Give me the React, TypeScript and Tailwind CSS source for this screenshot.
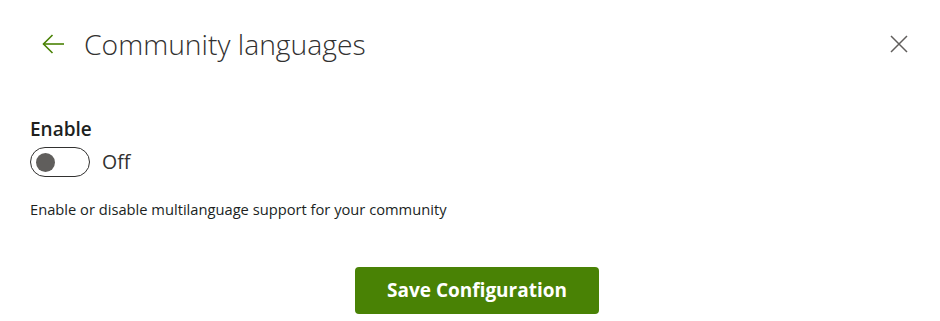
import React, { useState } from 'react';

export default function App() {
  const [enabled, setEnabled] = useState(false);

  return (
    <div className="w-[940px] h-[321px] bg-white font-['Open_Sans','Noto_Sans',sans-serif] text-[#323130]">
      {/* Header */}
      <div className="flex items-center justify-between pl-[42px] pr-[32px] pt-[26px]">
        <div className="flex items-center gap-[20px]">
          <button className="text-[#498205]" aria-label="Back">
            <svg width="22" height="20" viewBox="0 0 22 20" fill="none" stroke="currentColor" strokeWidth="1.6">
              <path d="M22 10H1.5" />
              <path d="M10.5 1L1.5 10l9 9" />
            </svg>
          </button>
          <h1 className="text-[28.3px] font-light leading-[36px] text-[#323130]">Community languages</h1>
        </div>
        <button className="text-[#605e5c]" aria-label="Close">
          <svg width="18" height="18" viewBox="0 0 18 18" fill="none" stroke="currentColor" strokeWidth="1.5">
            <path d="M1 1l16 16M17 1L1 17" />
          </svg>
        </button>
      </div>

      {/* Body */}
      <div className="pl-[30px] pt-[55px]">
        <div className="text-[19px] font-semibold leading-[24px] text-[#201f1e]">Enable</div>
        <div className="flex items-center gap-[12px] mt-[6px]">
          <button
            onClick={() => setEnabled(!enabled)}
            className={`w-[60px] h-[30px] rounded-full border border-[#323130] flex items-center px-[5px] ${enabled ? 'justify-end bg-[#498205]' : 'justify-start bg-white'}`}
          >
            <span className={`w-[19px] h-[19px] rounded-full ${enabled ? 'bg-white' : 'bg-[#605e5c]'}`} />
          </button>
          <span className="text-[19.5px] leading-[24px]">{enabled ? 'On' : 'Off'}</span>
        </div>
        <p className="mt-[22px] text-[14.7px] leading-[20px] text-[#201f1e]">
          Enable or disable multilanguage support for your community
        </p>
      </div>

      {/* Footer */}
      <div className="flex justify-center pl-[14px] mt-[48px]">
        <button className="w-[244px] h-[47px] rounded-[4px] bg-[#498205] text-white text-[19px] font-bold">
          Save Configuration
        </button>
      </div>
    </div>
  );
}
